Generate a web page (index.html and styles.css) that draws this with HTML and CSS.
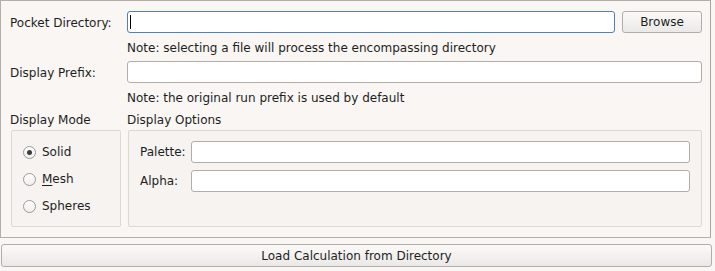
FILE: index.html
```html
<!DOCTYPE html>
<html lang="en">
<head>
<meta charset="UTF-8">
<title>Load Pocket</title>
<link rel="stylesheet" href="styles.css">
</head>
<body>
<section class="frame">
  <div class="form">
    <label class="label">Pocket Directory:</label>
    <div class="field-row">
      <div class="input focused"><span class="caret"></span></div>
      <button type="button" class="btn browse">Browse</button>
    </div>

    <div></div>
    <p class="note">Note: selecting a file will process the encompassing directory</p>

    <label class="label">Display Prefix:</label>
    <div class="input"></div>

    <div></div>
    <p class="note">Note: the original run prefix is used by default</p>

    <h2 class="heading">Display Mode</h2>
    <h2 class="heading">Display Options</h2>

    <div class="group modes">
      <div class="radio-row"><span class="radio checked"></span><span>Solid</span></div>
      <div class="radio-row"><span class="radio"></span><span><u>M</u>esh</span></div>
      <div class="radio-row"><span class="radio"></span><span>Spheres</span></div>
    </div>

    <div class="group options">
      <div class="opt-row">
        <label class="opt-label">Palette:</label>
        <div class="input"></div>
      </div>
      <div class="opt-row">
        <label class="opt-label">Alpha:</label>
        <div class="input"></div>
      </div>
    </div>
  </div>
</section>

<button type="button" class="btn load">Load Calculation from Directory</button>
</body>
</html>
```

FILE: styles.css
```css
* {
  margin: 0;
  padding: 0;
  box-sizing: border-box;
  font-family: 'DejaVu Sans', sans-serif;
}

body {
  width: 715px;
  height: 271px;
  background: #f9f6f3;
  color: #1e1e1e;
  font-size: 12px;
}

.frame {
  width: 711px;
  height: 238px;
  border: 1px solid #b3afab;
  border-right-color: #a9a5a1;
  padding: 10px 8px 0 9px;
}

.form {
  display: grid;
  grid-template-columns: 117px 1fr;
  grid-template-rows: 22px 28px 22px 28px 19px 97px;
}

.label,
.heading {
  display: flex;
  align-items: center;
  font-size: 12px;
  font-weight: normal;
}

.label {
  padding-top: 1px;
}

.heading {
  align-items: flex-start;
  line-height: 16px;
  padding-top: 1px;
}

.note {
  display: flex;
  align-items: center;
  padding-top: 1px;
}

.field-row {
  display: flex;
  gap: 7px;
}

.field-row .input {
  flex: 1;
}

.input {
  height: 22px;
  background: #fff;
  border: 1px solid #b1ada9;
  border-radius: 3px;
  position: relative;
}

.input.focused {
  border-color: #4a83b6;
}

.caret {
  position: absolute;
  left: 2px;
  top: 3px;
  width: 1px;
  height: 14px;
  background: #000;
}

.btn {
  background: linear-gradient(#fbfaf9, #ebe9e7);
  border: 1px solid #b1ada9;
  border-radius: 3px;
  font-size: 12px;
  color: #1e1e1e;
  cursor: pointer;
}

.browse {
  width: 80px;
  height: 22px;
}

.group {
  border: 1px solid #dcd8d4;
  border-radius: 2px;
  background: #f6f3f0;
}

.modes {
  width: 110px;
  margin-left: 1px;
  padding: 14px 0 0 11px;
  display: flex;
  flex-direction: column;
  gap: 13px;
}

.radio-row {
  display: flex;
  align-items: center;
  gap: 6px;
  height: 14px;
}

.radio-row u {
  text-decoration-thickness: 1px;
  text-underline-offset: 2px;
}

.radio {
  width: 13px;
  height: 13px;
  border: 1px solid #9d9994;
  border-radius: 50%;
  background: linear-gradient(#ffffff, #f1efed);
  display: flex;
  align-items: center;
  justify-content: center;
}

.radio.checked::after {
  content: "";
  width: 5px;
  height: 5px;
  border-radius: 50%;
  background: #3c3c3c;
}

.options {
  margin-left: 1px;
  padding: 10px 11px 0 11px;
  display: flex;
  flex-direction: column;
  gap: 7px;
}

.opt-row {
  display: grid;
  grid-template-columns: 51px 1fr;
  align-items: center;
}

.load {
  display: block;
  width: 711px;
  height: 23px;
  margin: 6px 0 0 1px;
}
```
